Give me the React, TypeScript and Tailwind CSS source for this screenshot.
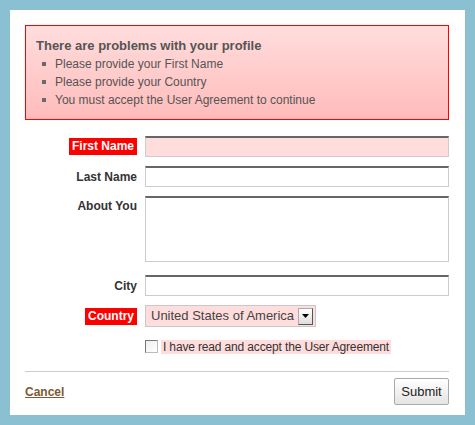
const errors = [
  "Please provide your First Name",
  "Please provide your Country",
  "You must accept the User Agreement to continue",
];

const inputCls =
  "block w-full h-[21px] border border-[#cccccc] border-t-2 border-t-[#666666] outline-none px-1 text-[12px]";

export default function App() {
  return (
    <div className="min-h-screen bg-[#8bbfd2] p-[10px] font-['Liberation_Sans',Arial,sans-serif]">
      <div className="w-[455px] h-[405px] bg-white pl-[15px] pr-[16px] pt-[15px] pb-[10px]">
        {/* Error summary */}
        <div className="h-[95px] border border-[#ff0000] bg-gradient-to-b from-[#ffdddd] to-[#ffbbbb] pl-[10px] pt-[11px]">
          <h2 className="text-[13px] leading-[18px] font-bold text-[#555555]">
            There are problems with your profile
          </h2>
          <ul>
            {errors.map((e) => (
              <li key={e} className="flex items-center h-[18px] text-[12px] text-[#555555]">
                <span className="ml-[6px] mr-[9px] w-[4px] h-[4px] bg-[#6a6a6a]"></span>
                {e}
              </li>
            ))}
          </ul>
        </div>

        {/* Form */}
        <form className="mt-[16px] text-[12px] text-[#333333]">
          <div className="grid grid-cols-[112px_1fr] gap-x-[8px]">
            <div className="flex justify-end items-center h-[21px]">
              <span className="bg-[#ff0000] text-white font-bold px-[3px] leading-[17px]">First Name</span>
            </div>
            <input className={`${inputCls} bg-[#ffdddd]`} />
          </div>

          <div className="grid grid-cols-[112px_1fr] gap-x-[8px] mt-[9px]">
            <label className="flex justify-end items-center h-[21px] font-bold">Last Name</label>
            <input className={inputCls} />
          </div>

          <div className="grid grid-cols-[112px_1fr] gap-x-[8px] mt-[9px]">
            <label className="text-right font-bold pt-[2px] leading-[17px]">About You</label>
            <textarea className="block w-full h-[66px] border border-[#cccccc] border-t-2 border-t-[#666666] outline-none resize-none" />
          </div>

          <div className="grid grid-cols-[112px_1fr] gap-x-[8px] mt-[13px]">
            <label className="flex justify-end items-center h-[21px] font-bold">City</label>
            <input className={inputCls} />
          </div>

          <div className="grid grid-cols-[112px_1fr] gap-x-[8px] mt-[9px]">
            <div className="flex justify-end items-center h-[22px]">
              <span className="bg-[#ff0000] text-white font-bold px-[3px] leading-[17px]">Country</span>
            </div>
            <div className="flex items-center w-[171px] h-[22px] border border-[#c8c8c8] bg-[#ffdddd] pl-[5px] pr-[2px]">
              <span className="flex-1 min-w-0 overflow-hidden whitespace-nowrap text-[13px] text-[#444444]">
                United States of America
              </span>
              <span className="shrink-0 flex items-center justify-center w-[15px] h-[17px] border border-[#aaaaaa] border-r-[#555555] border-b-[#555555] bg-gradient-to-b from-white to-[#dddddd]">
                <svg width="7" height="4" viewBox="0 0 7 4">
                  <path d="M0 0H7L3.5 4Z" fill="#000" />
                </svg>
              </span>
            </div>
          </div>

          <div className="grid grid-cols-[112px_1fr] gap-x-[8px] mt-[13px]">
            <div></div>
            <label className="flex items-center h-[13px]">
              <span className="w-[13px] h-[13px] border border-[#bbbbbb] border-t-[#777777] border-l-[#777777] bg-gradient-to-br from-[#eeeeee] to-white"></span>
              <span className="ml-[3px] bg-[#ffdddd] pl-[2px] pr-[2px] leading-[14px] tracking-[-0.15px]">
                I have read and accept the User Agreement
              </span>
            </label>
          </div>

          <hr className="mt-[18px] border-0 border-t border-[#cccccc]" />

          <div className="flex justify-between items-center mt-[6px]">
            <a href="#" className="font-bold underline text-[#7b5a35]">Cancel</a>
            <button
              type="button"
              className="w-[55px] h-[27px] border border-[#aaaaaa] rounded-[2px] bg-gradient-to-b from-white to-[#e4e4e4] text-[13px] text-[#222222]"
            >
              Submit
            </button>
          </div>
        </form>
      </div>
    </div>
  );
}
